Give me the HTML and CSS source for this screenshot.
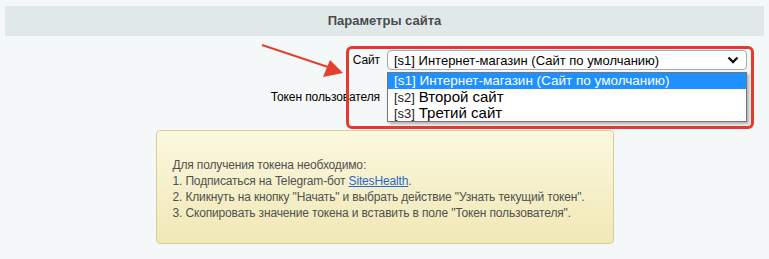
FILE: index.html
```html
<!DOCTYPE html>
<html lang="ru">
<head>
  <meta charset="UTF-8" />
  <title>Параметры сайта</title>
  <link rel="stylesheet" href="styles.css">
</head>
<body>

  <div class="section-title">Параметры сайта</div>

  <div class="settings">
    <div class="settings-label">Сайт</div>
    <div class="select-wrap">
      <div class="fake-select">
        <span>[s1] Интернет-магазин (Сайт по умолчанию)</span>
        <svg class="chevron" width="12" height="8" viewBox="0 0 12 8">
          <path d="M1.5 1.5 L6 6 L10.5 1.5" fill="none" stroke="#111" stroke-width="2.4"/>
        </svg>
      </div>
      <ul class="options">
        <li class="active">[s1] Интернет-магазин (Сайт по умолчанию)</li>
        <li><span class="code">[s2]</span> <span class="name">Второй сайт</span></li>
        <li><span class="code">[s3]</span> <span class="name">Третий сайт</span></li>
      </ul>
    </div>

    <div class="settings-label">Токен пользователя</div>
    <div><input type="text" class="token-input" /></div>
  </div>

  <div class="notice">
    Для получения токена необходимо:<br>
    1. Подписаться на Telegram-бот <a href="#">SitesHealth</a>.<br>
    2. Кликнуть на кнопку "Начать" и выбрать действие "Узнать текущий токен".<br>
    3. Скопировать значение токена и вставить в поле "Токен пользователя".
  </div>

  <!-- annotation -->
  <div class="highlight-box"></div>
  <svg class="pointer" width="100" height="45" viewBox="0 0 100 45">
    <line x1="7" y1="5" x2="76" y2="28" stroke="#e5402f" stroke-width="2"/>
    <polygon points="88,33 68,37 75,20" fill="#e5402f"/>
  </svg>

</body>
</html>
```

FILE: styles.css
```css
body {
  font-family: 'Liberation Sans', Arial, sans-serif;
  font-size: 13px;
  background: #f5f8f9;
  margin: 0;
  padding: 0;
  color: #000;
  position: relative;
  height: 259px;
  overflow: hidden;
}

.section-title {
  margin: 6px 5px 0;
  height: 30px;
  line-height: 30px;
  background: #e0e8ea;
  text-align: center;
  font-weight: bold;
  color: #4b4b4b;
}

.settings {
  display: grid;
  grid-template-columns: 380px 360px;
  column-gap: 7px;
  row-gap: 17px;
  margin-top: 14px;
}

.settings-label {
  text-align: right;
  line-height: 20px;
  font-size: 12px;
  letter-spacing: -0.1px;
}

.select-wrap {
  position: relative;
}

.fake-select {
  height: 20px;
  box-sizing: border-box;
  border: 1px solid #a9a9a9;
  border-radius: 4px;
  background: #fff;
  display: flex;
  align-items: center;
  justify-content: space-between;
  padding: 0 6px 0 6px;
}

.chevron {
  margin-right: 1px;
}

.token-input {
  width: 200px;
  height: 20px;
  box-sizing: border-box;
  border: 1px solid #a9a9a9;
  border-radius: 4px;
}

.options {
  position: absolute;
  top: 22px;
  left: 0;
  width: 360px;
  box-sizing: border-box;
  margin: 0;
  padding: 0;
  list-style: none;
  background: #fff;
  border: 1px solid #767676;
  box-shadow: 2px 2px 3px rgba(0,0,0,0.3);
  z-index: 2;
  font-size: 13.5px;
}

.options li {
  height: 16px;
  line-height: 16px;
  padding: 0 6px;
  white-space: nowrap;
}

.options li.active {
  background: #1e90ff;
  color: #fff;
}

.options .code {
  color: #222;
  font-size: 13px;
}

.options .name {
  font-size: 15px;
}

.notice {
  width: 458px;
  height: 114px;
  box-sizing: border-box;
  margin: 23px auto 0;
  padding: 26px 10px 0 16px;
  background: linear-gradient(#fbf8df, #f1e8b6);
  border: 1px solid #d9cd96;
  border-radius: 4px;
  color: #505050;
  font-size: 12px;
  letter-spacing: -0.15px;
  line-height: 16px;
  white-space: nowrap;
}

.notice a {
  color: #2a67cf;
  text-decoration: underline;
}

.highlight-box {
  position: absolute;
  left: 346px;
  top: 46px;
  width: 408px;
  height: 83px;
  box-sizing: border-box;
  border: 3px solid #e53a2e;
  border-radius: 6px;
  z-index: 3;
}

.pointer {
  position: absolute;
  left: 255px;
  top: 40px;
  z-index: 3;
}
```
